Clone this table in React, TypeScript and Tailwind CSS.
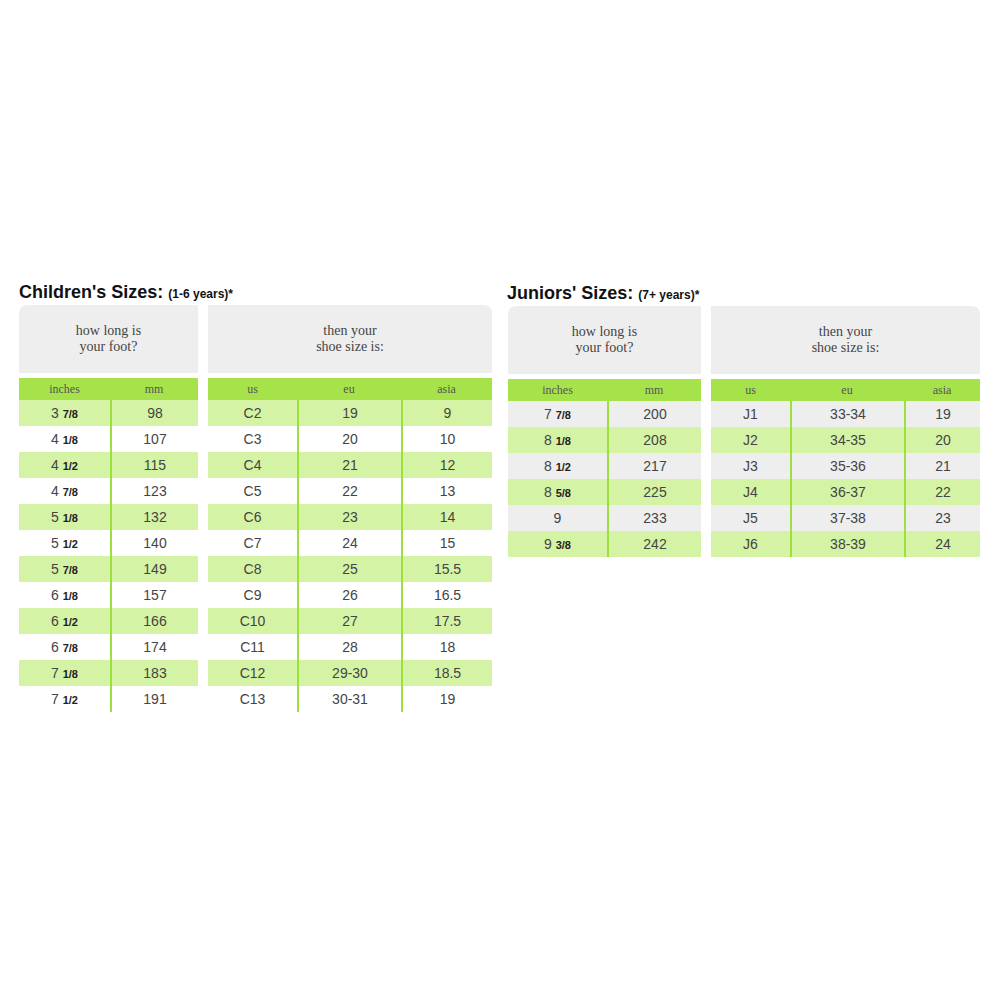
import React from "react";

type Row = React.ReactNode[];

const Frac = ({ w, f }: { w: string; f?: string }) => (
  <span>
    {w}
    {f ? (
      <>
        {" "}
        <span className="text-[11px] font-bold text-[#222]">{f}</span>
      </>
    ) : null}
  </span>
);

function Box({
  cols,
  heads,
  rows,
  title,
  rounded,
  odd,
  even,
  headH,
}: {
  cols: string;
  heads: string[];
  rows: Row[];
  title: [string, string];
  rounded: string;
  odd: string;
  even: string;
  headH: string;
}) {
  return (
    <div className="flex flex-col">
      <div
        className={`flex flex-col items-center justify-center bg-[#eeeeee] ${headH} ${rounded} text-[14px] leading-[16px] text-[#444]`}
        style={{ fontFamily: '"Liberation Serif", "Times New Roman", serif' }}
      >
        <div>{title[0]}</div>
        <div>{title[1]}</div>
      </div>
      <div
        className={`mt-[5px] grid h-[22px] items-center bg-[#a6e34b] text-[12px] text-[#555] ${cols}`}
        style={{ fontFamily: '"Liberation Serif", "Times New Roman", serif' }}
      >
        {heads.map((h) => (
          <div key={h} className="text-center">
            {h}
          </div>
        ))}
      </div>
      {rows.map((r, i) => (
        <div
          key={i}
          className={`grid h-[26px] text-[14px] text-[#444] ${cols} ${i % 2 === 0 ? odd : even}`}
        >
          {r.map((c, j) => (
            <div
              key={j}
              className={`flex items-center justify-center ${j > 0 ? "border-l-2 border-[#9ddf3f]" : ""}`}
            >
              {c}
            </div>
          ))}
        </div>
      ))}
    </div>
  );
}

const kidsFoot: Row[] = [
  [<Frac w="3" f="7/8" />, "98"],
  [<Frac w="4" f="1/8" />, "107"],
  [<Frac w="4" f="1/2" />, "115"],
  [<Frac w="4" f="7/8" />, "123"],
  [<Frac w="5" f="1/8" />, "132"],
  [<Frac w="5" f="1/2" />, "140"],
  [<Frac w="5" f="7/8" />, "149"],
  [<Frac w="6" f="1/8" />, "157"],
  [<Frac w="6" f="1/2" />, "166"],
  [<Frac w="6" f="7/8" />, "174"],
  [<Frac w="7" f="1/8" />, "183"],
  [<Frac w="7" f="1/2" />, "191"],
];

const kidsShoe: Row[] = [
  ["C2", "19", "9"],
  ["C3", "20", "10"],
  ["C4", "21", "12"],
  ["C5", "22", "13"],
  ["C6", "23", "14"],
  ["C7", "24", "15"],
  ["C8", "25", "15.5"],
  ["C9", "26", "16.5"],
  ["C10", "27", "17.5"],
  ["C11", "28", "18"],
  ["C12", "29-30", "18.5"],
  ["C13", "30-31", "19"],
];

const junFoot: Row[] = [
  [<Frac w="7" f="7/8" />, "200"],
  [<Frac w="8" f="1/8" />, "208"],
  [<Frac w="8" f="1/2" />, "217"],
  [<Frac w="8" f="5/8" />, "225"],
  [<Frac w="9" />, "233"],
  [<Frac w="9" f="3/8" />, "242"],
];

const junShoe: Row[] = [
  ["J1", "33-34", "19"],
  ["J2", "34-35", "20"],
  ["J3", "35-36", "21"],
  ["J4", "36-37", "22"],
  ["J5", "37-38", "23"],
  ["J6", "38-39", "24"],
];

function Title({ main, sub }: { main: string; sub: string }) {
  return (
    <div className="flex h-[22px] items-end text-[#111]">
      <span className="text-[18px] font-bold leading-[20px]">{main}</span>
      <span className="ml-[5px] text-[12px] font-bold leading-[16px]">{sub}</span>
    </div>
  );
}

export default function App() {
  return (
    <div
      className="min-h-[1000px] w-[1000px] bg-white"
      style={{ fontFamily: '"Liberation Sans", Arial, sans-serif' }}
    >
      <div className="flex pt-[280px]">
        <div className="ml-[19px] flex flex-col">
          <Title main="Children's Sizes:" sub="(1-6 years)*" />
          <div className="mt-[3px] flex gap-[10px]">
            <div className="w-[179px]">
              <Box
                cols="grid-cols-[91px_88px]"
                heads={["inches", "mm"]}
                rows={kidsFoot}
                title={["how long is", "your foot?"]}
                rounded="rounded-tl-[8px]"
                odd="bg-[#d5f3a5]"
                even="bg-white"
                headH="h-[68px]"
              />
            </div>
            <div className="w-[284px]">
              <Box
                cols="grid-cols-[89px_104px_91px]"
                heads={["us", "eu", "asia"]}
                rows={kidsShoe}
                title={["then your", "shoe size is:"]}
                rounded="rounded-tr-[8px]"
                odd="bg-[#d5f3a5]"
                even="bg-white"
                headH="h-[68px]"
              />
            </div>
          </div>
        </div>
        <div className="ml-[15px] flex flex-col pt-[1px]">
          <Title main="Juniors' Sizes:" sub="(7+ years)*" />
          <div className="mt-[3px] flex gap-[10px] pl-[1px]">
            <div className="w-[193px]">
              <Box
                cols="grid-cols-[99px_94px]"
                heads={["inches", "mm"]}
                rows={junFoot}
                title={["how long is", "your foot?"]}
                rounded="rounded-tl-[8px]"
                odd="bg-[#eeeeee]"
                even="bg-[#d5f3a5]"
                headH="h-[68px]"
              />
            </div>
            <div className="w-[269px]">
              <Box
                cols="grid-cols-[79px_114px_76px]"
                heads={["us", "eu", "asia"]}
                rows={junShoe}
                title={["then your", "shoe size is:"]}
                rounded="rounded-tr-[8px]"
                odd="bg-[#eeeeee]"
                even="bg-[#d5f3a5]"
                headH="h-[68px]"
              />
            </div>
          </div>
        </div>
      </div>
    </div>
  );
}
